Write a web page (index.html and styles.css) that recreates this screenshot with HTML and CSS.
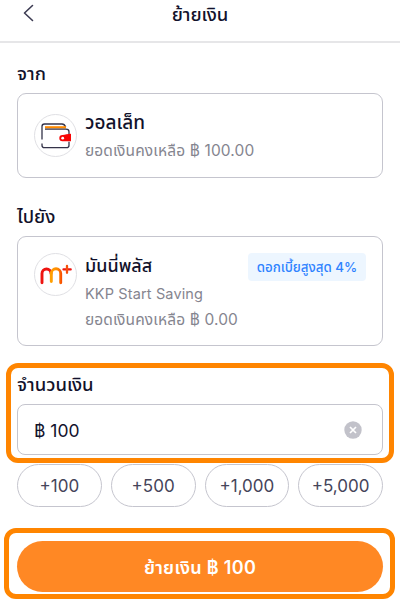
FILE: index.html
```html
<!DOCTYPE html>
<html lang="th">
<head>
  <meta charset="UTF-8">
  <meta name="viewport" content="width=device-width, initial-scale=1.0">
  <title>ย้ายเงิน</title>
  <link rel="stylesheet" href="styles.css">
</head>
<body>
  <header class="header">
    <svg class="back" width="12" height="18" viewBox="0 0 12 18" fill="none" stroke="#3c3b52" stroke-width="1.6" stroke-linecap="round" stroke-linejoin="round">
      <path d="M9.500 1.500 1.500 9l8 7.500"/>
    </svg>
    <h1 class="header-title">ย้ายเงิน</h1>
  </header>

  <main>
    <section class="block">
      <h2 class="label">จาก</h2>
      <div class="card">
        <div class="icon">
          <svg width="42" height="42" viewBox="0 0 42 42" fill="none">
            <path d="M7 24.500V11.500q0-2.500 2.500-2.500h17.500q2.500 0 3.700 3" stroke="#343349" stroke-width="1.300"/>
            <path d="M10 12.300h21" stroke="#ff8a00" stroke-width="2.200"/>
            <path d="M10 14.200h21q3 0 3 2.500v3M7 28.500v1.700q0 2.500 2.500 2.500h22q2.500 0 2.500-2.500v-3.500" stroke="#343349" stroke-width="1.300"/>
            <path d="M27.500 19.900q2 0 4-.6 2-.5 4.500-.5v7.500h-8.500a3.200 3.200 0 0 1 0-6.400z" fill="#f70505"/>
            <circle cx="27.700" cy="23.200" r="1.400" fill="#fff"/>
          </svg>
        </div>
        <div class="info">
          <div class="name name-wallet">วอลเล็ท</div>
          <div class="sub">ยอดเงินคงเหลือ ฿ 100.00</div>
        </div>
      </div>
    </section>

    <section class="block block-to">
      <h2 class="label">ไปยัง</h2>
      <div class="card card-to">
        <div class="icon">
          <svg width="42" height="42" viewBox="0 0 42 42" fill="none" stroke-linecap="round" stroke-linejoin="round">
            <defs>
              <linearGradient id="warm" x1="16" y1="0" x2="27" y2="0" gradientUnits="userSpaceOnUse">
                <stop stop-color="#ffa000"/>
                <stop offset=".6" stop-color="#ff8a00"/>
                <stop offset="1" stop-color="#f84800"/>
              </linearGradient>
            </defs>
            <path d="M7 28.800V19.500a4.500 4.500 0 0 1 9 0" stroke="#ee1410" stroke-width="2.900"/>
            <path d="M16.300 27.500V19.500a4.700 4.700 0 0 1 9.400 0v9.300" stroke="url(#warm)" stroke-width="2.900"/>
            <path d="M28.500 15.400h7.200" stroke="#ee1410" stroke-width="2.300"/>
            <path d="M32 12v6.800" stroke="#f5500a" stroke-width="2.300"/>
          </svg>
        </div>
        <div class="info">
          <div class="name">มันนี่พลัส</div>
          <div class="sub sub-latin">KKP Start Saving</div>
          <div class="sub">ยอดเงินคงเหลือ ฿ 0.00</div>
        </div>
        <div class="badge">ดอกเบี้ยสูงสุด 4%</div>
      </div>
    </section>

    <section class="highlight highlight-amount">
      <h2 class="label label-amount">จำนวนเงิน</h2>
      <div class="field">
        <span class="value">฿ 100</span>
        <svg width="18" height="18" viewBox="0 0 18 18">
          <circle cx="9" cy="9" r="8.700" fill="#c2c2ca"/>
          <path d="m6 6 6 6m0-6-6 6" stroke="#fff" stroke-width="1.700"/>
        </svg>
      </div>
    </section>

    <div class="chips">
      <button class="chip">+100</button>
      <button class="chip">+500</button>
      <button class="chip">+1,000</button>
      <button class="chip">+5,000</button>
    </div>

    <div class="highlight highlight-submit">
      <button class="submit">ย้ายเงิน ฿ 100</button>
    </div>
  </main>
</body>
</html>
```

FILE: styles.css
```css
* {
  box-sizing: border-box;
}

body {
  margin: 0;
  width: 400px;
  height: 600px;
  overflow: hidden;
  background: #fff;
  color: #12122b;
  font-family: Inter, "Noto Sans Thai", "Noto Sans", sans-serif;
}

h1, h2 {
  margin: 0;
}

.header {
  display: grid;
  grid-template-columns: 40px 1fr 40px;
  height: 43px;
  padding-bottom: 13px;
  align-items: center;
  border-bottom: 2px solid #e6e6e8;
}

.back {
  margin: 0 0 3px 23px;
}

.header-title {
  font-size: 18.500px;
  font-weight: 500;
  line-height: 20px;
  text-align: center;
}

.block {
  padding: 18px 17px 0;
}

.label {
  height: 24px;
  font-size: 18.500px;
  font-weight: 500;
  line-height: 24px;
  white-space: nowrap;
}

.card {
  display: flex;
  height: 85px;
  margin-top: 8px;
  padding: 16px;
  border: 1px solid #c5c5ce;
  border-radius: 9px;
}

.block-to {
  padding-top: 26px;
}

.card-to {
  height: 110px;
}

.icon {
  width: 43px;
  height: 43px;
  margin-top: 4px;
  flex: none;
  border: 1px solid #e0e0e4;
  border-radius: 50%;
}

.card-to .icon {
  margin-top: 0;
}

.info {
  flex: 1;
  margin-left: 8px;
  white-space: nowrap;
}

.name {
  height: 26px;
  font-size: 18px;
  font-weight: 500;
  line-height: 26px;
}

.name-wallet {
  font-size: 19px;
  line-height: 25px;
}

.sub {
  height: 26px;
  color: #85858f;
  font-size: 15.500px;
  letter-spacing: 0.13px;
  line-height: 29px;
}

.sub-latin {
  font-size: 14.500px;
}

.badge {
  width: 118px;
  height: 28px;
  flex: none;
  border-radius: 4px;
  background: #edf6ff;
  color: #2f83ff;
  font-size: 13.300px;
  font-weight: 500;
  line-height: 29px;
  text-align: center;
  white-space: nowrap;
}

.highlight {
  border: 5px solid #ff8500;
  border-radius: 12px;
}

.highlight-amount {
  height: 100px;
  margin: 17px 6px 0;
  padding: 4px 6px 0;
}

.field {
  display: flex;
  height: 51px;
  margin-top: 8px;
  padding: 0 20px 0 16px;
  align-items: center;
  justify-content: space-between;
  border: 1px solid #c5c5ce;
  border-radius: 8px;
}

.value {
  padding-top: 2px;
  font-size: 17.500px;
  line-height: 24px;
}

.chips {
  display: grid;
  grid-template-columns: repeat(4, 1fr);
  gap: 9px;
  margin: 1px 17px 0;
}

.chip {
  height: 43px;
  padding: 1px 0 0;
  border: 1px solid #c5c5ce;
  border-radius: 22px;
  background: #fff;
  color: #45445a;
  font-family: inherit;
  font-size: 17px;
}

.highlight-submit {
  height: 71px;
  margin: 21px 5px 0 4px;
  padding: 8px 7px 0 8px;
}

.submit {
  display: block;
  width: 100%;
  height: 51px;
  padding: 3px 0 0;
  border: 0;
  border-radius: 26px;
  background: #ff8824;
  color: #fff;
  font-family: inherit;
  font-size: 18px;
  font-weight: 600;
  letter-spacing: 0.3px;
}
```
